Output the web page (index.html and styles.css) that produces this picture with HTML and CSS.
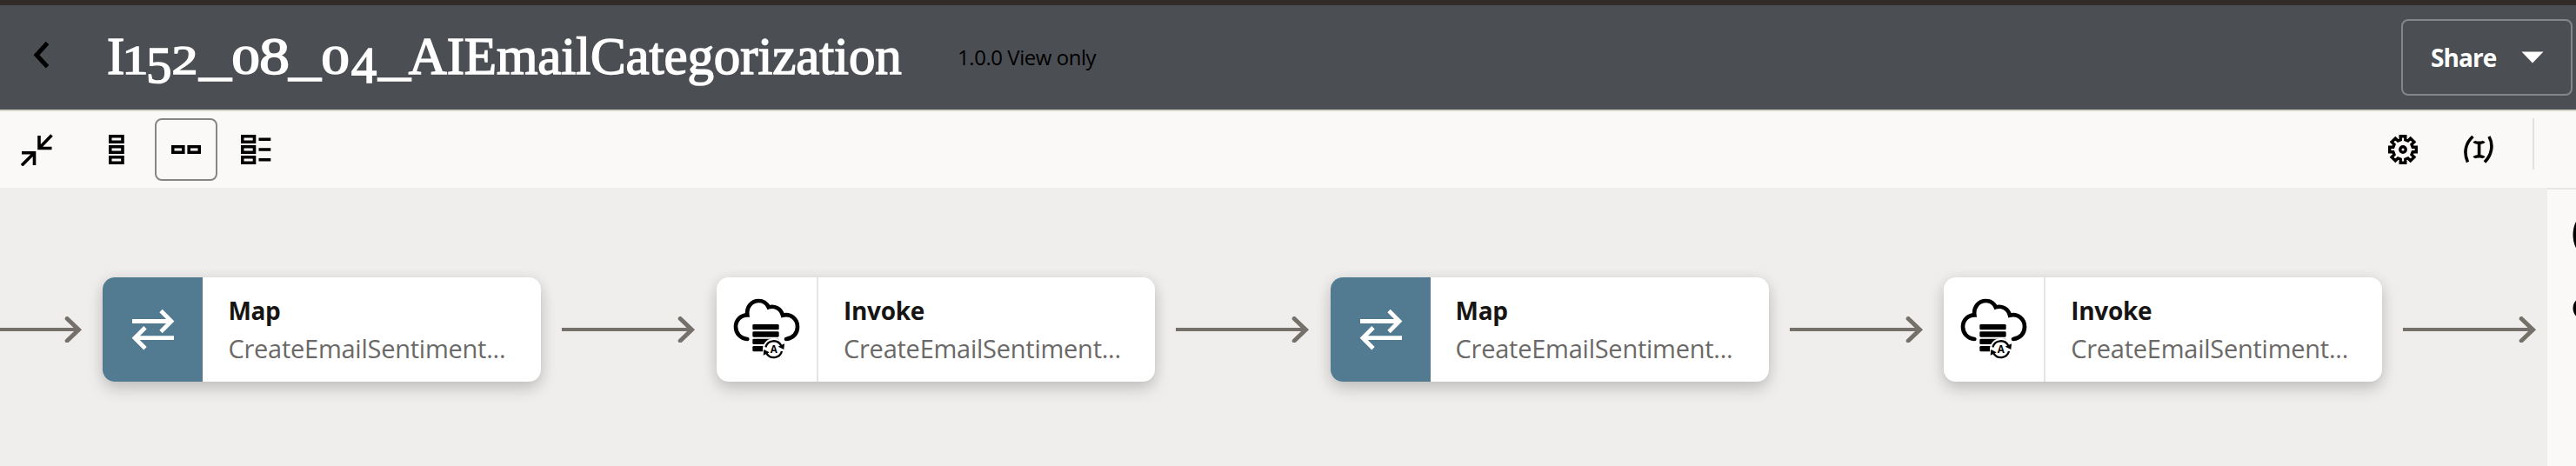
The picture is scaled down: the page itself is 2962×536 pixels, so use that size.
FILE: index.html
```html
<!DOCTYPE html>
<html lang="en">
<head>
<meta charset="utf-8">
<title>I152_08_04_AIEmailCategorization</title>
<link rel="stylesheet" href="styles.css">
</head>
<body>
<svg class="defs" aria-hidden="true">
  <defs>
    <symbol id="arrow" viewBox="0 0 202 30">
      <path d="M24 15H174" fill="none" stroke="#76706b" stroke-width="4.200"/>
      <path d="M160.500 2.500L173.800 15.300L160.500 28" fill="none" stroke="#76706b" stroke-width="5" stroke-linecap="round" stroke-linejoin="miter"/>
    </symbol>
    <symbol id="map" viewBox="0 0 115 120">
      <path d="M34 50.500H79M67 38.500L79 50.500L67 62.500M82 69.700H37M49 57.700L37 69.700L49 81.700" fill="none" stroke="#fff" stroke-width="4.800"/>
    </symbol>
    <symbol id="cloud" viewBox="-18 -3 345 360">
      <path d="M88 210C64 208 48 190 48 168C48 144 66 127 88 127C84 98 104 78 127 78C142 78 155 87 161 100C182 94 204 104 210 128C238 120 261 142 261 168C261 190 246 207 222 210" fill="none" stroke="#000" stroke-width="14" stroke-linecap="round"/>
      <rect x="106" y="159" width="91" height="19" rx="4"/>
      <rect x="106" y="184" width="91" height="19" rx="4"/>
      <rect x="106" y="209" width="91" height="19" rx="4"/>
      <rect x="106" y="234" width="80" height="19" rx="4"/>
      <circle cx="179" cy="245" r="38" fill="#fff"/>
      <path d="M151 238A29 29 0 0 1 205 233M207 252A29 29 0 0 1 154 259" fill="none" stroke="#000" stroke-width="7"/>
      <path d="M194 236L216 226L214 246ZM143 266L145 246L164 256Z"/>
      <text class="cloud-letter" x="179" y="258" text-anchor="middle">A</text>
    </symbol>
  </defs>
</svg>

<header class="header">
  <svg class="back" width="24" height="34" viewBox="0 0 24 34"><path d="M19.500 3.500L7 17.200L19.500 30.800" fill="none" stroke="#000" stroke-width="5"/></svg>
  <h1 class="title"><span class="cap-i">I</span><span class="num one"><b>1</b></span><span class="low five">5</span><span class="num two"><b>2</b></span><span class="us">_</span><span class="num zero"><b>0</b></span><span class="eight">8</span><span class="us">_</span><span class="num zero"><b>0</b></span><span class="low four">4</span><span class="us">_</span><span class="name">AIEmailCategorization</span></h1>
  <span class="version">1.0.0 View only</span>
  <button class="share"><span class="share-label">Share</span><svg width="26" height="14" viewBox="0 0 26 14"><path d="M.5 .5H25.500L13 13.500Z" fill="#fff"/></svg></button>
</header>

<nav class="toolbar">
  <button class="tool collapse"><svg width="38" height="38" viewBox="0 0 38 38"><g fill="none" stroke="#000" stroke-width="3.600"><path d="M22 3V17.500H36.500M36.500 2.500L22 17.500M2 22.800H16.500V37M16.500 22.800L2 37.300"/></g></svg></button>
  <button class="tool"><svg width="18" height="34" viewBox="0 0 18 34"><g fill="none" stroke="#000" stroke-width="3.600"><path d="M1.700 1.700H16V8.300H1.700ZM1.700 13.700H16V20.300H1.700ZM1.700 25.700H16V32.300H1.700Z"/></g></svg></button>
  <button class="tool selected"><svg width="34" height="10" viewBox="0 0 34 10"><g fill="none" stroke="#000" stroke-width="3.600"><path d="M1.700 1.700H13.800V8.300H1.700ZM20.200 1.700H32.300V8.300H20.200Z"/></g></svg></button>
  <button class="tool list"><svg width="35" height="34" viewBox="0 0 35 34"><g fill="none" stroke="#000" stroke-width="3.600"><path d="M1.700 1.700H15.500V8.300H1.700ZM1.700 13.700H15.500V20.300H1.700ZM1.700 25.700H15.500V32.300H1.700ZM20.500 5.300H34.300M20.500 17H34.300M20.500 28.700H34.300"/></g></svg></button>
  <span class="spacer"></span>
  <button class="tool gear"><svg width="34" height="34" viewBox="-17 -17 34 34"><g fill="none" stroke="#000" stroke-width="3.400"><path d="M-2.800 -15.300H2.800V-11.200L5.800 -10L8.700 -12.900L12.900 -8.700L10 -5.800L11.200 -2.800H15.300V2.800H11.200L10 5.800L12.900 8.700L8.700 12.900L5.800 10L2.800 11.200V15.300H-2.800V11.200L-5.800 10L-8.700 12.900L-12.900 8.700L-10 5.800L-11.200 2.800H-15.300V-2.800H-11.200L-10 -5.800L-12.900 -8.700L-8.700 -12.900L-5.800 -10L-2.800 -11.200Z"/><circle r="3.200"/></g></svg></button>
  <button class="tool vars"><svg width="36" height="32" viewBox="0 0 36 32"><g fill="none" stroke="#000" stroke-width="3.600"><path d="M11.500 1C2.500 9 .8 20 5.500 30.500M30 1C35.500 11 33 22 25 30.500M18.600 8V24"/><path d="M13 6.500Q14 8.300 18.600 8.300Q23 8.300 24 6.500M13 25.500Q14 23.700 18.600 23.700Q23 23.700 24 25.500"/></g></svg></button>
  <span class="divider"></span>
</nav>

<main class="workspace">
  <section class="canvas">
    <svg class="connector first"><use href="#arrow"/></svg>
    <article class="card map">
      <div class="icon"><svg><use href="#map"/></svg></div>
      <div class="text"><strong>Map</strong><span>CreateEmailSentiment...</span></div>
    </article>
    <svg class="connector"><use href="#arrow"/></svg>
    <article class="card invoke">
      <div class="icon"><svg><use href="#cloud"/></svg></div>
      <div class="text"><strong>Invoke</strong><span>CreateEmailSentiment...</span></div>
    </article>
    <svg class="connector"><use href="#arrow"/></svg>
    <article class="card map">
      <div class="icon"><svg><use href="#map"/></svg></div>
      <div class="text"><strong>Map</strong><span>CreateEmailSentiment...</span></div>
    </article>
    <svg class="connector"><use href="#arrow"/></svg>
    <article class="card invoke">
      <div class="icon"><svg><use href="#cloud"/></svg></div>
      <div class="text"><strong>Invoke</strong><span>CreateEmailSentiment...</span></div>
    </article>
    <svg class="connector"><use href="#arrow"/></svg>
  </section>
  <aside class="panel">
    <svg width="4" height="318" viewBox="0 0 4 318"><circle cx="35" cy="52" r="32.500" fill="none" stroke="#000" stroke-width="4"/><circle cx="14" cy="136.500" r="13.500"/></svg>
  </aside>
</main>
</body>
</html>
```
FILE: styles.css
```css
* { box-sizing: border-box; }
body {
  margin: 0;
  width: 2962px;
  height: 536px;
  overflow: hidden;
  font-family: "Open Sans", "Noto Sans", sans-serif;
  color: #161513;
  background: #f0eeec;
}
button { font: inherit; padding: 0; border: 0; background: none; }
svg { display: block; flex: none; }
.defs { position: absolute; width: 0; height: 0; }

.header {
  display: flex;
  align-items: center;
  height: 128px;
  padding: 4px 4px 0 35px;
  border-top: 6px solid #302b28;
  border-bottom: 2px solid #d6d6c8;
  background: #4b4e53;
}
.back { margin-top: -10px; }

/* Title with old-style figures: 0, 1, 2 at x-height, 4 and 5 descending */
.title {
  display: flex;
  align-items: baseline;
  margin: -2px 0 0 64px;
  width: 978px;
  flex: none;
  font: 400 61px/80px "Liberation Serif", serif;
  color: #fff;
  -webkit-text-stroke: 1.5px #fff;
  white-space: nowrap;
}
.title span { display: block; flex: none; text-align: center; }
.title b { display: inline-block; font-weight: 400; transform: scaleX(1.4); }
.title .one b { transform: scaleX(1.3); }
.title .two b { transform: scaleX(1.3); }
.cap-i { width: 20px; }
.num { font-size: 46px; }
.one { width: 25px; }
.five { width: 29px; }
.two { width: 31.5px; }
.us { width: 37px; transform: scaleX(1.2); }
.zero { width: 33.3px; }
.eight { width: 33.3px; transform: scaleX(1.15); }
.four { width: 32.3px; }
.low { font-size: 59px; transform: translateY(10px); }
.name { margin-left: -2px; letter-spacing: -.1px; }

.version { margin-top: -5px; font-size: 24px; letter-spacing: -.45px; color: #000; white-space: nowrap; }
.share {
  display: flex;
  align-items: center;
  gap: 30px;
  width: 197px;
  height: 88px;
  margin: -4px 0 0 auto;
  padding-left: 32px;
  border: 2px solid #85868a;
  border-radius: 8px;
  color: #fff;
}
.share-label { width: 74px; font-size: 28px; font-weight: 700; letter-spacing: -.9px; text-align: left; }

.toolbar {
  display: flex;
  align-items: center;
  height: 88px;
  padding-left: 23px;
  background: #fbf9f8;
}
.collapse { margin-right: 64px; }
.selected {
  display: grid;
  place-items: center;
  width: 72px;
  height: 72px;
  margin: 0 27px 0 35px;
  border: 2px solid #888684;
  border-radius: 8px;
}
.spacer { flex: 1; }
.gear { margin-right: 52px; }
.vars { margin-right: 44px; }
.divider { align-self: flex-start; width: 2px; height: 59px; margin: 8px 48px 0 0; background: #e2e1df; }

.workspace { display: flex; height: 320px; }
.canvas {
  display: flex;
  align-items: center;
  width: 2929px;
  overflow: hidden;
  background: #f0eeec;
}
.connector { width: 201.6px; height: 30px; margin-top: 6px; }
.connector.first { margin-left: -83.2px; }
.card {
  display: flex;
  flex: none;
  width: 504px;
  height: 120px;
  margin-top: 6px;
  border-radius: 14px;
  overflow: hidden;
  background: #fff;
  box-shadow: 0 8px 18px rgba(0, 0, 0, .18), 0 0 16px rgba(0, 0, 0, .05);
}
.icon { flex: none; width: 115px; height: 120px; }
.icon svg { width: 115px; height: 120px; }
.map .icon { background: #527b91; }
.invoke .icon { width: 117px; border-right: 2px solid #e6e5e4; }
.cloud-letter { font: 700 35px "Open Sans", sans-serif; fill: #000; }
.text {
  display: flex;
  flex-direction: column;
  padding: 16px 0 0 29px;
  line-height: 44px;
  white-space: nowrap;
}
.text strong { font-size: 28px; font-weight: 700; letter-spacing: -.3px; }
.text span { font-size: 29px; letter-spacing: -.25px; color: #6b6967; }

.panel {
  display: flex;
  justify-content: flex-end;
  width: 33px;
  border-top: 2px solid #e8e6e4;
  background: #fbf9f8;
}
```
